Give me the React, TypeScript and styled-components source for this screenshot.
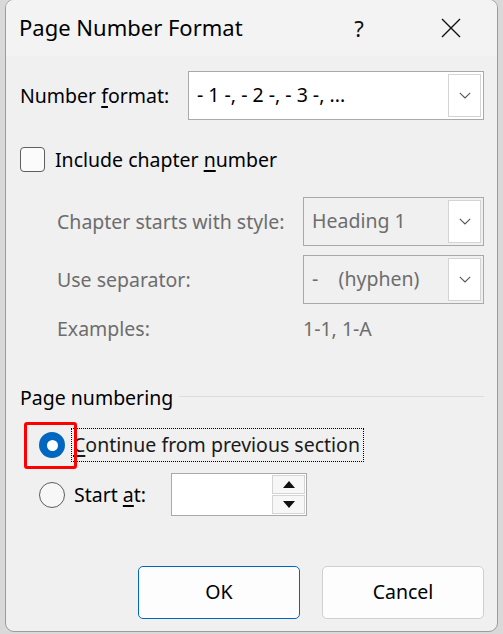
import React from 'react';
import styled, { createGlobalStyle } from 'styled-components';

const Global = createGlobalStyle`
  html, body { margin: 0; padding: 0; }
  body {
    width: 503px; height: 634px; overflow: hidden; background: #d9d9d9;
    font-family: "Noto Sans", "Open Sans", sans-serif;
  }
  * { box-sizing: border-box; }
`;

const Screen = styled.div`
  width: 503px;
  height: 634px;
  overflow: hidden;
  background: #d9d9d9;
  padding-left: 5px;
  display: flex;
  align-items: flex-start;
`;

const Window = styled.div`
  width: 493px;
  height: 633px;
  margin-top: -1px;
  border: 1px solid #9c9c9c;
  border-radius: 9px;
  background: #f0f0f0;
  overflow: hidden;
  display: flex;
  flex-direction: column;
  color: #1a1a1a;
  font-size: 19.5px;
`;

const TitleBar = styled.div`
  height: 56px;
  flex: none;
  background: #f3f3f3;
  display: flex;
  align-items: center;
  padding-left: 13px;
`;

const Title = styled.div`
  font-size: 22px;
  flex: 1;
  color: #000;
  padding-bottom: 2px;
`;

const TitleButton = styled.div`
  width: 92px;
  height: 56px;
  display: flex;
  align-items: center;
  justify-content: center;
  font-size: 22px;
  color: #111;
`;

const Body = styled.div`
  flex: 1;
  padding: 15px 13px 0 14px;
  display: flex;
  flex-direction: column;
  position: relative;
`;

const Row = styled.div<{ $mt?: number; $h?: number }>`
  display: flex;
  align-items: center;
  margin-top: ${p => p.$mt ?? 0}px;
  height: ${p => p.$h ?? 24}px;
`;

const Label = styled.div<{ $w?: number; $disabled?: boolean }>`
  width: ${p => (p.$w ? `${p.$w}px` : 'auto')};
  flex: none;
  color: ${p => (p.$disabled ? '#6d6d6d' : '#000')};
  white-space: nowrap;
  line-height: 24px;
`;

const Key = styled.span`
  text-decoration: underline;
  text-underline-offset: 3px;
  text-decoration-thickness: 1.5px;
`;

const Combo = styled.div<{ $disabled?: boolean }>`
  flex: 1;
  height: 100%;
  border: 1px solid #a9a9a9;
  background: ${p => (p.$disabled ? '#f0f0f0' : '#fff')};
  display: flex;
  align-items: center;
  padding: 2px 2px 2px 8px;
  color: ${p => (p.$disabled ? '#6d6d6d' : '#000')};
`;

const ComboText = styled.div`
  flex: 1;
  white-space: pre;
  line-height: 24px;
  padding-bottom: 1px;
`;

const ComboButton = styled.div`
  width: 33px;
  height: 100%;
  background: #fff;
  border: 1px solid #d4d4d4;
  display: flex;
  align-items: center;
  justify-content: center;
`;

const CheckBox = styled.div`
  width: 25px;
  height: 25px;
  border: 1.5px solid #5f5f5f;
  border-radius: 4px;
  background: #fbfbfb;
  margin-right: 10px;
  flex: none;
`;

const Indent = styled.div`
  display: flex;
  flex-direction: column;
  padding-left: 37px;
`;

const GroupHeader = styled.div`
  display: flex;
  align-items: center;
  margin-top: 45px;
  height: 24px;
`;

const GroupLine = styled.div`
  flex: 1;
  height: 1px;
  background: #dcdcdc;
  margin-left: 6px;
  margin-top: -3px;
`;

const RadioRow = styled.div<{ $mt: number; $h: number }>`
  display: flex;
  align-items: center;
  margin-top: ${p => p.$mt}px;
  height: ${p => p.$h}px;
  padding-left: 19px;
  position: relative;
`;

const Radio = styled.div<{ $checked?: boolean }>`
  width: 26px;
  height: 26px;
  border-radius: 50%;
  flex: none;
  margin-right: 9px;
  display: flex;
  align-items: center;
  justify-content: center;
  background: ${p => (p.$checked ? '#0067c0' : '#f7f7f7')};
  border: ${p => (p.$checked ? 'none' : '1.5px solid #5c5c5c')};
  &::after {
    content: '';
    display: ${p => (p.$checked ? 'block' : 'none')};
    width: 11px;
    height: 11px;
    border-radius: 50%;
    background: #fff;
  }
`;

const FocusText = styled.div`
  outline: 1px dotted #000;
  outline-offset: 0;
  height: 32px;
  display: flex;
  align-items: center;
  padding: 0 3px 2px 1px;
  margin-left: -2px;
  white-space: nowrap;
`;

const Highlight = styled.div`
  position: absolute;
  left: 4px;
  top: -7px;
  width: 53px;
  height: 47px;
  border: 3.5px solid #ff0000;
  border-radius: 3px;
  pointer-events: none;
`;

const Spin = styled.div`
  width: 136px;
  height: 43px;
  margin-left: 25px;
  border: 1px solid #a9a9a9;
  background: #fff;
  display: flex;
  justify-content: flex-end;
  padding: 1px;
`;

const SpinButtons = styled.div`
  width: 33px;
  display: flex;
  flex-direction: column;
  gap: 1px;
`;

const SpinButton = styled.div`
  flex: 1;
  background: #f7f7f7;
  border: 1px solid #d4d4d4;
  display: flex;
  align-items: center;
  justify-content: center;
`;

const Buttons = styled.div`
  display: flex;
  justify-content: flex-end;
  gap: 22px;
  margin-top: 50px;
`;

const Button = styled.div<{ $default?: boolean }>`
  width: 162px;
  height: 53px;
  background: #fdfdfd;
  border: 1px solid ${p => (p.$default ? '#0067c0' : '#cfcfcf')};
  border-radius: 5px;
  display: flex;
  align-items: center;
  justify-content: center;
  color: #000;
  padding-bottom: 2px;
`;

const Chevron = () => (
  <svg width="12" height="7" viewBox="0 0 12 7">
    <path d="M0.8 0.8 L6 6 L11.2 0.8" fill="none" stroke="#555" strokeWidth="1.1" />
  </svg>
);

const Tri = ({ up }: { up?: boolean }) => (
  <svg width="12" height="7" viewBox="0 0 12 7">
    <path d={up ? 'M0 7 L6 0 L12 7 Z' : 'M0 0 L6 7 L12 0 Z'} fill="#111" />
  </svg>
);

const CloseIcon = () => (
  <svg width="20" height="20" viewBox="0 0 20 20">
    <path d="M1 1 L19 19 M19 1 L1 19" stroke="#111" strokeWidth="1.4" />
  </svg>
);

export default function App() {
  return (
    <Screen>
      <Global />
      <Window>
        <TitleBar>
          <Title>Page Number Format</Title>
          <TitleButton>?</TitleButton>
          <TitleButton>
            <CloseIcon />
          </TitleButton>
        </TitleBar>
        <Body>
          <Row $h={49}>
            <Label $w={168}>
              Number <Key>f</Key>ormat:
            </Label>
            <Combo>
              <ComboText>- 1 -, - 2 -, - 3 -, ...</ComboText>
              <ComboButton>
                <Chevron />
              </ComboButton>
            </Combo>
          </Row>
          <Row $mt={27} $h={25}>
            <CheckBox />
            <Label>
              Include chapter <Key>n</Key>umber
            </Label>
          </Row>
          <Indent>
            <Row $mt={25} $h={49}>
              <Label $w={246} $disabled>
                Chapter starts with style:
              </Label>
              <Combo $disabled>
                <ComboText>Heading 1</ComboText>
                <ComboButton>
                  <Chevron />
                </ComboButton>
              </Combo>
            </Row>
            <Row $mt={9} $h={49}>
              <Label $w={246} $disabled>
                Use separator:
              </Label>
              <Combo $disabled>
                <ComboText>{'-    (hyphen)'}</ComboText>
                <ComboButton>
                  <Chevron />
                </ComboButton>
              </Combo>
            </Row>
            <Row $mt={13} $h={24}>
              <Label $w={246} $disabled>
                Examples:
              </Label>
              <Label $disabled>1-1, 1-A</Label>
            </Row>
          </Indent>
          <GroupHeader>
            <Label>Page numbering</Label>
            <GroupLine />
          </GroupHeader>
          <RadioRow $mt={19} $h={32}>
            <Radio $checked />
            <FocusText>
              <span>
                <Key>C</Key>ontinue from previous section
              </span>
            </FocusText>
            <Highlight />
          </RadioRow>
          <RadioRow $mt={12} $h={43}>
            <Radio />
            <Label>
              Start <Key>a</Key>t:
            </Label>
            <Spin>
              <SpinButtons>
                <SpinButton>
                  <Tri up />
                </SpinButton>
                <SpinButton>
                  <Tri />
                </SpinButton>
              </SpinButtons>
            </Spin>
          </RadioRow>
          <Buttons>
            <Button $default>OK</Button>
            <Button>Cancel</Button>
          </Buttons>
        </Body>
      </Window>
    </Screen>
  );
}
